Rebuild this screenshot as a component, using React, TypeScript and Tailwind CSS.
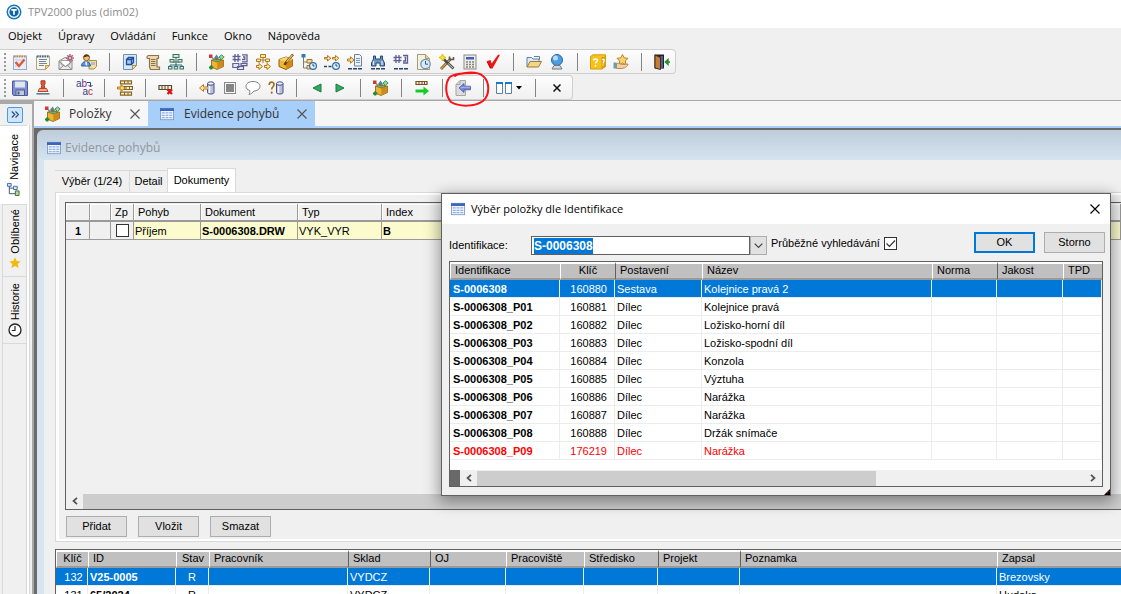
import { useEffect, useRef, type ReactNode } from "react";

const UI = "font-['Liberation_Sans',Arial,sans-serif]";
const HUM = "font-['Open_Sans','Noto_Sans',sans-serif]";

function Ico({ children, size = "size-4" }: { children: ReactNode; size?: string }) {
  return (
    <svg viewBox="0 0 16 16" className={`${size} shrink-0`} fill="none" aria-hidden="true">
      {children}
    </svg>
  );
}

const CLOCK = (
  <>
    <circle cx="12" cy="12" r="3.4" fill="#e4f1fc" stroke="#2f6cab" strokeWidth="1.2" />
    <path d="M12 10v2h1.6" stroke="#1f4f86" />
  </>
);
const DASHES = <path d="M1 14.8h4M6 14.8h4M11 14.8h4" stroke="#23456f" strokeWidth="1.4" />;

const GEAR = (
  <>
    <path d="M3 1v8M6 1v8M.5 3.500h8M.5 6.500h8" stroke="#5f5f96" strokeWidth="1.3" />
    <rect x="3" y="3.500" width="3" height="3" fill="#fff" stroke="#5f5f96" />
  </>
);

const icons: Record<string, ReactNode> = {
  checklist: (
    <>
      <rect x="1.5" y="2" width="13" height="13.5" fill="#e6eefb" stroke="#9aa9cb" />
      <path d="M2 2.5h12" stroke="#c88b3e" strokeWidth="2" strokeDasharray="1.5 1" />
      <path d="M3 6h9M3 9h3M3 12h4" stroke="#b9cbe4" />
      <path d="M3.5 8l3.500 4 5.500-6.500" stroke="#dd5a35" strokeWidth="2.4" />
    </>
  ),
  notepad: (
    <>
      <path d="M1.5 2h13v9.5l-4 4h-9z" fill="#fbf6df" stroke="#a3a79e" />
      <path d="M2 2.5h12" stroke="#4f6283" strokeWidth="2" strokeDasharray="1.5 1" />
      <path d="M4 5.5h8M4 7.5h7M4 9.5h8M4 11.5h5" stroke="#7085ad" />
      <path d="M10.500 15.500v-4h4z" fill="#f4d789" stroke="#b59b58" />
    </>
  ),
  mail: (
    <>
      <path d="M1 7l6-3.500 7 3.500v8.500H1z" fill="#ececec" stroke="#8b8b8b" />
      <path d="M3 6.500h9v4l-4.500 2L3 10.500z" fill="#fff" stroke="#aaa" />
      <path d="M1 15.500l5-4.500M14 15.500L9 11M1 7.500l6.500 5 6.500-5" stroke="#8b8b8b" />
      <path d="M12 0v8M8 4h8M9.200 1.200l5.600 5.600M14.800 1.200L9.200 6.800" stroke="#b0657f" strokeWidth="1.500" />
      <circle cx="12" cy="4" r="1.500" fill="#f6e9ee" stroke="#a55a76" />
    </>
  ),
  person: (
    <>
      <path d="M8 6.500h7.500v6l-2.500 2.500H8z" fill="#f7e096" stroke="#a58f4d" />
      <rect x="10" y="8" width="4" height="3" fill="#a9bfdb" />
      <circle cx="5.500" cy="3.700" r="3" fill="#f1c27d" stroke="#8b5a2b" />
      <path d="M2.500 3.500c0-4 6-4 6 0L7 2.300z" fill="#5a3414" />
      <path d="M.5 12c0-6 8.500-6 9 0z" fill="#5b97d6" stroke="#2e5f99" />
      <path d="M5 7.500l.5 4" stroke="#fff" strokeWidth="1.500" />
    </>
  ),
  docCube: (
    <>
      <path d="M1.500 .5h13v11l-4 4h-9z" fill="#d6e7f8" stroke="#6e90b8" />
      <path d="M4.500 5.500h5v5h-5zM4.500 5.500l2-2h5v5l-2 2M9.500 5.500l2-2" fill="#a9c8ee" stroke="#1f4f9a" strokeWidth="1.300" />
      <path d="M10.500 15.500v-4h4z" fill="#f8dc92" stroke="#a58f4d" />
    </>
  ),
  scroll: (
    <>
      <path d="M3.500 1.500h10v3H12v8.500h2.500v2.500h-9L4.500 13V4.500h-2c-1-1-.5-3 1-3z" fill="#ecd9a8" stroke="#8b7350" strokeWidth="1.200" />
      <path d="M6 5.500h4.500M6 7.500h4.500M6 9.500h4.500M6 11.500h4.500" stroke="#8b7350" />
    </>
  ),
  treeGreen: (
    <>
      <path d="M8 4v8M3.500 8h9M3.500 7v1M12.500 7v1M2 13v-2h12v2M8 10v1" stroke="#31717a" />
      <g fill="#e9ef92" stroke="#31717a">
        <rect x="5" y=".5" width="6" height="3" />
        <rect x="2" y="5.500" width="4" height="2.500" />
        <rect x="10" y="5.500" width="4" height="2.500" />
        <rect x=".5" y="12.500" width="3.500" height="2.500" />
        <rect x="6.200" y="12.500" width="3.500" height="2.500" />
        <rect x="12" y="12.500" width="3.500" height="2.500" />
      </g>
    </>
  ),
  box: (
    <>
      <path d="M2.500 6l5.500 2 6.500-2v6.500L8 15.500l-5.500-2.500z" fill="#f2b32e" stroke="#8a5a12" strokeWidth=".8" />
      <path d="M8.300 8.200l6-2v6.100l-6 2.900z" fill="#cf8a1e" />
      <path d="M2.500 6L7 3.500 14.500 6 8 8z" fill="#8a6a32" />
      <rect x="0" y=".5" width="3.500" height="3.500" fill="#d2392e" />
      <path d="M3 3.500l3 3" stroke="#6e8f9c" strokeWidth="1.200" />
      <path d="M7.500 .5L10 4H5z" fill="#4d87ad" />
      <path d="M12.500 .8l2.700 2.200-2.700 2.500-2.500-2.500z" fill="#8fd9a0" stroke="#3f9a56" />
      <path d="M5 6.500h6" stroke="#57b86a" strokeWidth="1.500" />
      <path d="M2.200 11.500v4M0 13.500h4.400" stroke="#1d8c2c" strokeWidth="2.200" />
    </>
  ),
  gears: (
    <>
      <g transform="translate(0 -1)">{GEAR}</g>
      <path d="M10 .8h5v7h-5M11 3h1.800v2.500H10" stroke="#5f5f96" strokeWidth="1.300" />
      <path d="M.8 9.500h6v4h-6zM9 9.500h6v2.200H9zM5.500 12.500h6v3h-6z" fill="#e3e6f3" stroke="#5f5f96" strokeWidth="1.200" />
    </>
  ),
  treeOrange: (
    <>
      <path d="M8 3v6M3 6h10M4 6v3M12 6v3M1 12h5M9 12h5" stroke="#b5791b" />
      <g fill="#fbe6ae" stroke="#b5791b">
        <path d="M5.500.5h5v3h-5zM1.500 5h4v2.500h-4zM10.500 5h4v2.500h-4z" />
        <path d="M4 9.500l3.500 3L4 15.500v-2H1.500v-2H4zM12 9.500l3.500 3-3.500 3v-2H9.500v-2H12z" />
      </g>
    </>
  ),
  boxPencil: (
    <>
      <path d="M1 5.500l7-2.500 6.500 2.500V12L8 15.500 1 12.500z" fill="#f2b632" stroke="#8a5a12" />
      <path d="M8 8l6.500-2.500V12L8 15.500z" fill="#d08a1c" />
      <path d="M1 5.500l7-2.500 6.500 2.500L8 8z" fill="#f9d575" />
      <path d="M15 .5L8 8.500l-1.500 2.500" stroke="#5c3b10" strokeWidth="2.400" />
      <path d="M14.500 1L8.500 8" stroke="#f2c14e" strokeWidth="1.200" />
    </>
  ),
  treeClock: (
    <>
      <path d="M2.500 3v11h4M2.500 8h4" stroke="#7a7a7a" />
      <rect x=".5" y="0" width="4" height="3.500" fill="#2f7fae" />
      <path d="M6 5.500h5v3.500H6zM6 11.500h3.500V15H6z" fill="#f5d98d" stroke="#a87720" />
      {CLOCK}
    </>
  ),
  arrowsClock: (
    <>
      <path d="M.5 3.500h3V1.500L6.800 4.200 3.500 7V5h-3zM8.500 3.500h3V1.500l3.300 2.700L11.500 7V5h-3z" fill="#fbe6ae" stroke="#b5791b" />
      <path d="M0 12.500h3M4.500 12.500h3" stroke="#23456f" strokeWidth="1.500" />
      {CLOCK}
    </>
  ),
  arrowDoc: (
    <>
      <path d="M7.500 .5h5l2 2v9.500h-7z" fill="#eef4fb" stroke="#6d7f99" />
      <path d="M9 4.500h4M9 6.500h4M9 8.500h4" stroke="#7f95b5" />
      <path d="M.5 5h3V2.800l3.500 3.200-3.500 3.200V7h-3z" fill="#fbe6ae" stroke="#b5791b" />
      {DASHES}
    </>
  ),
  binoculars: (
    <>
      <path d="M3.500 2h2v3h5V2h2v3l2 4v3h-4.500V9H6v3H1.500V9l2-4z" fill="#6e94bd" stroke="#244a7a" />
      <path d="M3.500 7v4M12 7v4" stroke="#d5e6f5" strokeWidth="1.300" />
      {DASHES}
    </>
  ),
  gearDash: (
    <>
      <g>{GEAR}</g>
      <path d="M10 1.500h4.500v7.500H10M11.500 3.500h1v3.500H10" stroke="#5f5f96" strokeWidth="1.300" />
      {DASHES}
    </>
  ),
  docClock: (
    <>
      <path d="M1.500 .5h8l4 4v11h-12z" fill="#f6f1de" stroke="#a39a7c" />
      <path d="M9.500.5v4h4" fill="#f2cf7c" stroke="#a39a7c" />
      <circle cx="9.500" cy="10" r="4.700" fill="#dcebf8" stroke="#6f94b8" strokeWidth="1.300" />
      <path d="M9.500 7v3.200h2.500" stroke="#33597f" />
    </>
  ),
  tools: (
    <>
      <path d="M2 15L12 4.500" stroke="#5a4a2d" strokeWidth="2.600" />
      <path d="M2 15L12 4.500" stroke="#dfa435" strokeWidth="1.300" />
      <path d="M5 5.500L14.500 14.500" stroke="#4b4b4b" strokeWidth="2.600" />
      <path d="M9 9.500l5 4.500" stroke="#c9c9c9" />
      <path d="M10.500 2.500v3h4V3" stroke="#5a5a5a" strokeWidth="1.600" />
      <path d="M3.500 0l1 2.500L7 3.500 4.500 4.500l-1 2.500-1-2.500L0 3.500l2.500-1z" fill="#ffe81a" stroke="#d9bd00" strokeWidth="1" />
    </>
  ),
  calculator: (
    <>
      <rect x="2" y="1" width="12" height="14" fill="#efece8" stroke="#8d8987" />
      <rect x="4" y="3" width="8" height="2.500" fill="#3b62b3" />
      <path d="M4 8h8M4 10.500h8M4 13h8" stroke="#85817e" strokeWidth="1.300" strokeDasharray="2 1" />
    </>
  ),
  check: (
    <>
      <path d="M2 7l3.500-1 1.200 3.500L13 .8h2L7.500 14.500H5z" fill="#f01414" />
      <path d="M2 7.500l3.500 6.500" stroke="#a80d0d" />
    </>
  ),
  folder: (
    <>
      <path d="M1 13V3.500h4.500L7 5h6v3" fill="#dfeaf7" stroke="#5b7fb0" />
      <path d="M1 13L4 7.500h11.500L12.500 13z" fill="#f4d68a" stroke="#a47a32" />
      <path d="M8 2.500h5.500v3" stroke="#5b7fb0" />
    </>
  ),
  globe: (
    <>
      <circle cx="8" cy="6" r="5.500" fill="#4a9de0" stroke="#2767a5" />
      <circle cx="6.500" cy="4" r="2.500" fill="#b8dcf8" />
      <path d="M5 11.500h6l2 3.500H3z" fill="#d5d7da" stroke="#75797f" />
    </>
  ),
  questionBox: (
    <>
      <path d="M.5 2.500L3 .8h12.500v11.700L12 15H.5z" fill="#f7c21c" stroke="#d69e0c" />
      <path d="M11.500 3h4v9.500l-4 2.500z" fill="#d89c0e" />
      <path d="M3.500 6.500c0-2 4-2 4 0 0 1.500-2 1.200-2 3M5.500 11v1.500M12.500 6c1-1.500 2-.5 1.500 1l-1 2.500M13 10.500v1" stroke="#fff" strokeWidth="1.400" />
    </>
  ),
  handStar: (
    <>
      <path d="M9.500 .5l1.700 3.300 3.800.5-2.700 2.700.6 3.800-3.400-1.700-3.400 1.700.6-3.800L4 4.300l3.800-.5z" fill="#f7d36b" stroke="#b8862a" />
      <path d="M.5 8.500h3v6h-3z" fill="#5aa2c4" />
      <path d="M3.500 9.500c3-1 4 1.500 7 1l4.500-.5c0 2.500-4 4.500-7 4.500H3.500z" fill="#f3cfa4" stroke="#b98752" />
    </>
  ),
  door: (
    <>
      <path d="M.5 .5H10v14H.5z" fill="#2b1f1a" />
      <path d="M6.500 2h2.500v12.500H6.500z" fill="#3b63a8" />
      <path d="M1 1l5.500 2.500v12L1 14z" fill="#c47c3c" stroke="#4b2c12" />
      <path d="M16 8h-3M14 5.500L11.300 8l2.700 2.500z" fill="#3fae3a" stroke="#2a8b2a" strokeWidth="1.400" />
    </>
  ),
  save: (
    <>
      <path d="M.5 1h14l1 1v13.500H1.500L.5 14z" fill="#7f8fce" stroke="#4a5a99" />
      <rect x="3" y="1.500" width="10" height="6" fill="#dfe6f3" />
      <path d="M4 10h8.500v5.500H4z" fill="#c4cad6" stroke="#4a5a99" />
      <rect x="5.500" y="11.500" width="2" height="3" fill="#4a5a99" />
    </>
  ),
  stamp: (
    <>
      <path d="M6 .8h4v3l-.8 1.500.6 3H6.200l.6-3-.8-1.500z" fill="#e4553a" stroke="#a83a26" />
      <path d="M4.500 8.500h7l1.500 3H3z" fill="#f5a48e" stroke="#b8452f" />
      <path d="M1.500 13.800h13" stroke="#5a7d8d" strokeWidth="1.600" />
    </>
  ),
  rowsArrow: (
    <>
      <path d="M3.500 .8h11v3h-11zM6 6.500h9.500v3H6zM3.500 12.200h11v3h-11z" fill="#f9edc6" stroke="#8a6425" strokeWidth="1.200" />
      <path d="M7.500 1v3M11 1v3M9 6.500v3M12.500 6.500v3M7.500 12.200v3M11 12.200v3" stroke="#8a6425" />
      <path d="M.5 7h3.500V4.500L8 8l-4 3.500V9H.5z" fill="#ffd96b" stroke="#b5791b" />
    </>
  ),
  rowDelete: (
    <>
      <path d="M1 5.500h12.500v4H1z" fill="#f4edc8" stroke="#5b4a3b" strokeWidth="1.200" />
      <path d="M4 5.500v4M7 5.500v4M10 5.500v4" stroke="#5b4a3b" />
      <path d="M9.500 9.500l4.500 4.500M14 9.500L9.500 14" stroke="#e00f0f" strokeWidth="2.200" />
    </>
  ),
  arrowCylinder: (
    <>
      <path d="M8.500 3.500v9c0 2 6.500 2 6.500 0v-9z" fill="#b9bfdf" stroke="#474d86" />
      <ellipse cx="11.800" cy="3.500" rx="3.200" ry="1.700" fill="#eef0fa" stroke="#474d86" />
      <path d="M10.500 6v7" stroke="#f5f6fc" strokeWidth="1.500" />
      <path d="M9 7H4.500V4.500L.5 8l4 3.500V9H9" fill="#fbe6ae" stroke="#b5791b" />
    </>
  ),
  stop: (
    <>
      <rect x="2.500" y="2.500" width="11" height="11" fill="#f7f7f7" stroke="#8a8a8a" />
      <rect x="4" y="4" width="8" height="8" fill="#858585" />
    </>
  ),
  speech: <path d="M8 1.500c4 0 7 2 7 4.800s-3 4.700-6 4.700c-1.500 1.500-2.500 3-5 3.500.7-1 1-2.500.7-4C2.500 9.700 1 8.500 1 6.300 1 3.500 4 1.500 8 1.500z" fill="#fff" stroke="#7d7d7d" />,
  questionCylinder: (
    <>
      <path d="M8.500 3.500v9c0 2 6.500 2 6.500 0v-9z" fill="#b9bfdf" stroke="#474d86" />
      <ellipse cx="11.800" cy="3.500" rx="3.200" ry="1.700" fill="#eef0fa" stroke="#474d86" />
      <path d="M10.500 6v7" stroke="#f5f6fc" strokeWidth="1.500" />
      <path d="M1.200 5c0-3.800 4.800-3.800 4.800-.5 0 2.300-2.300 2.200-2.300 5M3.700 11.500v2.300" stroke="#a6701c" strokeWidth="1.700" />
    </>
  ),
  prev: <path d="M12 4v8L4 8z" fill="#35a862" stroke="#1c7a3e" />,
  next: <path d="M4 4v8l8-4z" fill="#35a862" stroke="#1c7a3e" />,
  rowGreen: (
    <>
      <path d="M2 1.500h11v3H2z" fill="#f4edc8" stroke="#7a4c2a" strokeWidth="1.200" />
      <path d="M5 1.500v3M8 1.500v3M10.500 1.500v3" stroke="#7a4c2a" />
      <path d="M1.500 9.500h8V6.500L15 11l-5.500 4.500v-3h-8z" fill="#12cf22" />
    </>
  ),
  pageBlue: (
    <>
      <path d="M1 4.500L5 .5h5.500v15H1z" fill="#dcdcdc" stroke="#a5a5a5" />
      <path d="M5 .5v4H1" stroke="#a5a5a5" />
      <path d="M4 8l5-4.500v2.700h6.500v3.600H9v2.700z" fill="#7686d4" stroke="#4656a8" strokeWidth=".8" />
      <path d="M5.500 8L9 7.200h6" stroke="#b3bdec" />
    </>
  ),
  windows: (
    <>
      <path d="M.5 2.500h6v11h-6zM9.500 2.500h6v11h-6z" fill="#fff" stroke="#5b7fa8" />
      <path d="M0 3h7M9 3h7" stroke="#1878d0" strokeWidth="2.200" />
    </>
  ),
  table: (
    <>
      <rect x=".5" y="1.500" width="15" height="13" fill="#f2f6fc" stroke="#8199c6" />
      <path d="M0 3h16" stroke="#3a65c0" strokeWidth="3.200" />
      <path d="M2 6.800h12M2 9.500h12M2 12.200h12" stroke="#8fb0e2" strokeWidth="1.400" strokeDasharray="3.400 .9" />
    </>
  ),
};

function ToolButton({ name, wide }: { name: string; wide?: boolean }) {
  return (
    <button type="button" aria-label={name} className={`flex h-5 shrink-0 items-center justify-center ${wide ? "w-[34px] gap-1" : "w-[23px]"}`}>
      <Ico>{icons[name]}</Ico>
      {wide && (
        <svg viewBox="0 0 6 4" className="h-1 w-1.5" aria-hidden="true">
          <path d="M0 0h6L3 3.500z" fill="#000" />
        </svg>
      )}
    </button>
  );
}

function Sep() {
  return (
    <span className="flex w-[18px] shrink-0 justify-center">
      <span className="h-[18px] w-px bg-[#838383]" />
    </span>
  );
}

function Grip() {
  return (
    <span className="flex w-1 flex-col gap-0.5">
      {[0, 1, 2, 3, 4].map((i) => (
        <span key={i} className="size-0.5 bg-[#9a9a9a]" />
      ))}
    </span>
  );
}

function ToolGroup({ groups }: { groups: string[][] }) {
  return (
    <>
      {groups.map((g, i) => (
        <div key={i} className="flex items-center">
          {i > 0 && <Sep />}
          {g.map((n, j) => (
            <ToolButton key={j} name={n} wide={n === "windows"} />
          ))}
        </div>
      ))}
    </>
  );
}

const BAR = "flex h-[25px] w-fit items-center rounded-r border border-l-0 border-[#cfcfcf] bg-linear-to-b from-[#fdfdfd] to-[#f0f0f0] pl-1 pr-0.5";

function Toolbars() {
  return (
    <div className="flex flex-col gap-px border-b border-[#a8a8a8] bg-[#f0f0f0]">
      <div role="toolbar" aria-label="Hlavní" className={BAR}>
        <Grip />
        <ToolGroup
          groups={[
            ["checklist", "notepad", "mail", "person"],
            ["docCube", "scroll", "treeGreen"],
            ["box", "gears", "treeOrange", "boxPencil", "treeClock", "arrowsClock", "arrowDoc", "binoculars", "gearDash", "docClock", "tools", "calculator", "check"],
            ["folder", "globe"],
            ["questionBox", "handStar"],
            ["door"],
          ]}
        />
      </div>
      <div role="toolbar" aria-label="Okno" className={BAR}>
        <Grip />
        <ToolGroup groups={[["save", "stamp"]]} />
        <Sep />
        <button type="button" aria-label="Nahradit" className={`flex h-5 w-[23px] flex-col items-center justify-center pr-0.5 pl-1 ${UI} text-[10px] leading-[8px]`}>
          <span className="flex self-start text-[#2c3f88]">
            a<span className="text-[#7c2f7c]">b</span>
            <svg viewBox="0 0 6 8" className="h-2 w-1.5" fill="none" aria-hidden="true">
              <path d="M0 2.500h3.500v4M1.500 5l2 2 2-2" stroke="#2c3f88" />
            </svg>
          </span>
          <span className="self-end text-[#2c3f88]">
            a<span className="text-[#c2304a]">c</span>
          </span>
        </button>
        <Sep />
        <ToolGroup
          groups={[["rowsArrow"], ["rowDelete"], ["arrowCylinder", "stop", "speech", "questionCylinder"], ["prev", "next"], ["box"], ["rowGreen"]]}
        />
        <Sep />
        <div className="relative">
          <ToolButton name="pageBlue" />
          <svg viewBox="0 0 46 38" className="pointer-events-none absolute -top-2 -left-1.5 z-10 h-[38px] w-[46px] max-w-none" fill="none" aria-hidden="true">
            <path
              d="M10 6C14 3 31 0 38 6C45 12 45 25 38 31C30 37 14 37 6 32C0 25 0 14 4 8C8 3 20 3 29 3"
              stroke="#fb1118"
              strokeWidth="2"
              strokeLinecap="round"
            />
          </svg>
        </div>
        <Sep />
        <ToolButton name="windows" wide />
        <Sep />
        <button type="button" aria-label="Zavřít" className="flex h-5 w-[26px] items-center justify-center">
          <svg viewBox="0 0 8 8" className="size-2" aria-hidden="true">
            <path d="M.5.5l7 7M7.500.5l-7 7" stroke="#111" strokeWidth="1.500" />
          </svg>
        </button>
      </div>
    </div>
  );
}

const VERT = `rotate-180 [writing-mode:vertical-rl] ${UI} text-[11px] leading-[14px]`;

function Sidebar() {
  return (
    <aside className="flex w-[34px] shrink-0 flex-col border-t-[3px] border-r-2 border-[#a8a8a8] bg-[#f0f0f0]">
      <div className="flex h-[21px] items-center pl-[7px]">
        <button type="button" aria-label="Rozbalit" className="flex size-4 items-center justify-center rounded-xs border border-[#4a9be8] bg-[#cfe5fa]">
          <svg viewBox="0 0 8 7" className="h-[7px] w-2" fill="none" aria-hidden="true">
            <path d="M.8.5l3 3-3 3M4.500.5l3 3-3 3" stroke="#274f86" strokeWidth="1.200" />
          </svg>
        </button>
      </div>
      <div className="mr-0.5 flex flex-1 flex-col border-r border-[#d9d9d9] bg-white">
        <div className="mr-0.5 flex flex-1 flex-col border-t border-[#d9d9d9] bg-[#f0f0f0]">
          <button type="button" className="flex h-[78px] flex-col items-center gap-[3px] bg-white pt-2">
            <span className={VERT}>Navigace</span>
            <svg viewBox="0 0 14 14" className="size-[13px]" fill="none" aria-hidden="true">
              <path d="M2.500 3v8.500H9M2.500 5.500H8" stroke="#2f4f7f" />
              <path d="M.5.5h4v3h-4zM7 3.500h4v3.500H7z" fill="#dbe7f5" stroke="#3a66a8" />
              <path d="M9 8.500h4v5H9z" fill="#b7d6a5" stroke="#3d6b2c" />
            </svg>
          </button>
          <div className="ml-0.5 flex flex-1 flex-col border-r border-l border-[#d9d9d9]">
            <button type="button" className="flex h-[73px] flex-col items-center gap-[3px] border-y border-[#d9d9d9] pt-1">
              <span className={VERT}>Oblíbené</span>
              <svg viewBox="0 0 12 12" className="size-3" aria-hidden="true">
                <path d="M6 .3l1.700 3.700 4 .4-3 2.700.9 4L6 9l-3.600 2.100.9-4-3-2.700 4-.4z" fill="#f2b90f" />
              </svg>
            </button>
            <button type="button" className="flex h-[67px] flex-col items-center gap-[3px] border-b border-[#d9d9d9] pt-1.5">
              <span className={VERT}>Historie</span>
              <svg viewBox="0 0 14 14" className="size-3.5" fill="none" aria-hidden="true">
                <circle cx="7" cy="7" r="6" fill="#fff" stroke="#222" strokeWidth="1.300" />
                <path d="M7 3v4.500H3.800" stroke="#222" strokeWidth="1.200" />
              </svg>
            </button>
          </div>
        </div>
      </div>
    </aside>
  );
}

function CloseX({ color = "#555", size = "size-2.5" }: { color?: string; size?: string }) {
  return (
    <svg viewBox="0 0 10 10" className={size} aria-hidden="true">
      <path d="M.5.5l9 9M9.500.5l-9 9" stroke={color} strokeWidth="1.200" />
    </svg>
  );
}

function DocTab({ icon, label, active }: { icon: string; label: string; active?: boolean }) {
  return (
    <div className={`flex h-full items-center ${active ? "w-[167px] bg-[#a8cffa]" : "w-[114px]"}`}>
      <button type="button" className={`flex flex-1 items-center ${active ? "gap-2.5 pl-3" : "gap-2 pl-[11px]"}`}>
        <Ico size={active ? "size-3.5" : "size-4"}>{icons[icon]}</Ico>
        <span className={`${HUM} text-[12px] leading-5 text-[#333]`}>{label}</span>
      </button>
      <button type="button" aria-label={`Zavřít ${label}`} className="pr-2">
        <CloseX />
      </button>
    </div>
  );
}

const WBTN = "h-[21px] w-[61px] border border-[#adadad] bg-[#e1e1e1] text-center text-[11px]";

type Col = { w: string; t: string; a?: string; dark?: boolean };

const mainCols: Col[] = [
  { w: "w-[32px]", t: "Klíč", a: "text-center" },
  { w: "w-[88px]", t: "ID" },
  { w: "w-[33px]", t: "Stav", a: "text-center" },
  { w: "w-[139px]", t: "Pracovník" },
  { w: "w-[82px]", t: "Sklad", dark: true },
  { w: "w-[76px]", t: "OJ", dark: true },
  { w: "w-[78px]", t: "Pracoviště" },
  { w: "w-[74px]", t: "Středisko" },
  { w: "w-[82px]", t: "Projekt", dark: true },
  { w: "w-[257px]", t: "Poznamka", dark: true },
  { w: "w-[125px]", t: "Zapsal" },
];

const mainRows = [
  ["132", "V25-0005", "R", "", "VYDCZ", "", "", "", "", "", "Brezovsky"],
  ["131", "65/2024", "R", "", "VYDCZ", "", "", "", "", "", "Hudaka"],
];

const pickCols: Col[] = [
  { w: "w-[110px]", t: "Identifikace" },
  { w: "w-[55px]", t: "Klíč", a: "text-center" },
  { w: "w-[87px]", t: "Postavení", dark: true },
  { w: "w-[230px]", t: "Název" },
  { w: "w-[65px]", t: "Norma" },
  { w: "w-[66px]", t: "Jakost", dark: true },
  { w: "w-[39px]", t: "TPD" },
];

const pickRows = [
  ["S-0006308", "160880", "Sestava", "Kolejnice pravá 2"],
  ["S-0006308_P01", "160881", "Dílec", "Kolejnice pravá"],
  ["S-0006308_P02", "160882", "Dílec", "Ložisko-horní díl"],
  ["S-0006308_P03", "160883", "Dílec", "Ložisko-spodní díl"],
  ["S-0006308_P04", "160884", "Dílec", "Konzola"],
  ["S-0006308_P05", "160885", "Dílec", "Výztuha"],
  ["S-0006308_P06", "160886", "Dílec", "Narážka"],
  ["S-0006308_P07", "160887", "Dílec", "Narážka"],
  ["S-0006308_P08", "160888", "Dílec", "Držák snímače"],
  ["S-0006308_P09", "176219", "Dílec", "Narážka"],
];

function HeadRow({ cols }: { cols: Col[] }) {
  return (
    <thead>
      <tr>
        {cols.map((c) => (
          <th
            key={c.t}
            className={`h-[18px] border-t-2 border-b-2 border-l border-t-white border-b-[#9a9a9a] bg-[#c0c0c0] px-1 pt-0 pb-px text-[11px] leading-[13px] font-normal ${c.w} ${
              c.dark ? "border-l-[#606060]" : "border-l-white"
            } ${c.a ?? "text-left"}`}
          >
            {c.t}
          </th>
        ))}
      </tr>
    </thead>
  );
}

const BODY_CELL = "h-[18px] border-r border-b border-[#ececec] pt-0.5 pb-0 text-[11px] leading-[15px]";

function MainTable() {
  return (
    <table className="w-[1066px] table-fixed border-separate border-spacing-0 bg-white">
      <HeadRow cols={mainCols} />
      <tbody>
        {mainRows.map((r, i) => (
          <tr key={r[0]} className={i === 0 ? "bg-[#0078d7] text-white" : "text-black"}>
            {r.map((v, j) => (
              <td
                key={j}
                className={`${BODY_CELL} ${j === 0 ? "pr-0 pl-1 text-center" : j === 2 ? "px-0 text-center" : "pr-0 pl-0.5"} ${
                  j === 1 ? "font-bold" : ""
                }`}
              >
                {v}
              </td>
            ))}
          </tr>
        ))}
      </tbody>
    </table>
  );
}

function ArrowLeft() {
  return (
    <svg viewBox="0 0 6 8" className="h-2 w-1.5" fill="none" aria-hidden="true">
      <path d="M5 .8L1.500 4 5 7.200" stroke="#505050" strokeWidth="1.700" />
    </svg>
  );
}

function DocTable() {
  const head = "h-[18px] border-r border-b-2 border-[#9a9a9a] bg-[#f0f0f0] p-0 px-1 text-left text-[11px] leading-4 font-normal shadow-[inset_1px_1px_0_#fff]";
  const cell = "h-[18px] border-r border-b border-[#9a9a9a] p-0 pl-px text-[11px] leading-4";
  return (
    <table className="mt-px w-full table-fixed border-separate border-spacing-0">
      <thead>
        <tr>
          <th className={`w-6 ${head}`} />
          <th className={`w-[21px] ${head}`} />
          <th className={`w-[23px] ${head}`}>Zp</th>
          <th className={`w-[67px] ${head}`}>Pohyb</th>
          <th className={`w-[97px] ${head}`}>Dokument</th>
          <th className={`w-[84px] ${head}`}>Typ</th>
          <th className={head}>Index</th>
        </tr>
      </thead>
      <tbody>
        <tr>
          <td className={`text-center font-bold ${cell}`}>1</td>
          <td className={cell} />
          <td className={cell}>
            <input type="checkbox" aria-label="Zp" className="mx-auto block size-[13px] appearance-none border border-[#333] bg-white" />
          </td>
          <td className={`bg-[#fbfbcd] ${cell}`}>Příjem</td>
          <td className={`bg-[#fbfbcd] font-bold ${cell}`}>S-0006308.DRW</td>
          <td className={`bg-[#fbfbcd] ${cell}`}>VYK_VYR</td>
          <td className={`bg-[#fbfbcd] font-bold ${cell}`}>B</td>
        </tr>
      </tbody>
    </table>
  );
}

function Dialog() {
  const input = useRef<HTMLInputElement>(null);
  useEffect(() => {
    input.current?.focus();
    input.current?.select();
  }, []);
  return (
    <section
      role="dialog"
      aria-labelledby="dlg-title"
      className="absolute top-[193px] left-[441px] z-20 flex h-[303px] w-[670px] flex-col border border-[#606060] bg-[#f0f0f0] shadow-[0_4px_14px_2px_rgba(0,0,0,0.38)]"
    >
      <header className="flex h-[30px] items-center gap-1.5 bg-white pr-2.5 pl-[9px]">
        <Ico size="size-3.5">{icons.table}</Ico>
        <h2 id="dlg-title" className={`flex-1 ${HUM} text-[11px] leading-4`}>
          Výběr položky dle Identifikace
        </h2>
        <button type="button" aria-label="Zavřít">
          <CloseX color="#000" />
        </button>
      </header>
      <div className="flex h-[33px] items-center pt-2 pr-[5px] pb-0.5 pl-[7px] text-[11px]">
        <label htmlFor="ident" className="w-[82px] pt-1">
          Identifikace:
        </label>
        <div className="flex h-[19px] w-[236px] self-end">
          <input
            ref={input}
            id="ident"
            defaultValue="S-0006308"
            className="min-w-0 flex-1 border border-[#606060] bg-white px-0.5 text-[12px] leading-4 font-bold caret-[#ff8728] outline-none selection:bg-[#0078d7] selection:text-white"
          />
          <button type="button" aria-label="Nabídka" className="flex w-[17px] items-center justify-center border border-[#adadad] bg-[#e1e1e1]">
            <svg viewBox="0 0 9 6" className="h-1.5 w-[9px]" fill="none" aria-hidden="true">
              <path d="M.7.7l3.800 3.800L8.300.7" stroke="#444" strokeWidth="1.200" />
            </svg>
          </button>
        </div>
        <label htmlFor="live" className="pl-1">
          Průběžné vyhledávání
        </label>
        <span className="relative ml-1 size-[13px]">
          <input id="live" type="checkbox" defaultChecked className="block size-full appearance-none border border-[#333] bg-white" />
          <svg viewBox="0 0 13 13" className="pointer-events-none absolute inset-0" fill="none" aria-hidden="true">
            <path d="M2.500 6.500l3 3L11 3.500" stroke="#333" strokeWidth="1.200" />
          </svg>
        </span>
        <div className="ml-auto flex gap-[9px] self-start">
          <button type="button" className="h-[21px] w-[61px] border-2 border-[#0078d7] bg-[#e1e1e1]">
            OK
          </button>
          <button type="button" className={WBTN}>
            Storno
          </button>
        </div>
      </div>
      <div className="mx-[7px] mt-1 mb-2 flex flex-1 flex-col justify-between border border-[#606060] bg-white">
        <table className="w-full table-fixed border-separate border-spacing-0">
          <HeadRow cols={pickCols} />
          <tbody>
            {pickRows.map((r, i) => (
              <tr key={r[0]} className={i === 0 ? "bg-[#0078d7] text-white" : i === 9 ? "text-[#ff0000]" : "text-black"}>
                {[...r, "", "", ""].map((v, j) => (
                  <td
                    key={j}
                    className={`${BODY_CELL} ${j === 0 ? "pr-0 pl-[3px] font-bold" : j === 1 ? "pr-[7px] pl-0 text-right" : "pr-0 pl-0.5"}`}
                  >
                    {v}
                  </td>
                ))}
              </tr>
            ))}
          </tbody>
        </table>
        <div className="flex h-4 items-center bg-[#f0f0f0]">
          <span className="h-full w-2.5 bg-[#696969]" />
          <button type="button" aria-label="Vlevo" className="flex w-[17px] justify-center">
            <ArrowLeft />
          </button>
          <span className="h-[15px] w-[399px] bg-[#cdcdcd]" />
          <button type="button" aria-label="Vpravo" className="ml-auto rotate-180 px-1.5">
            <ArrowLeft />
          </button>
        </div>
      </div>
      <svg viewBox="0 0 6 6" className="absolute right-0 bottom-0 size-1.5" aria-hidden="true">
        <path d="M6 0v6H0z" fill="#000" />
        <path d="M3 3.500h1v1H3zM4.500 2h1v1h-1z" fill="#f00" />
      </svg>
    </section>
  );
}

export default function App() {
  return (
    <div className={`relative flex h-screen flex-col overflow-hidden bg-[#f0f0f0] text-black ${UI}`}>
      <header className="flex h-7 shrink-0 items-center gap-1.5 bg-white pb-1 pl-1.5">
        <svg viewBox="0 0 16 16" className="size-4" fill="none" aria-hidden="true">
          <circle cx="8" cy="8" r="7.500" fill="#1779bd" />
          <circle cx="8" cy="8" r="5.300" fill="#0f62a5" stroke="#fff" strokeWidth="1.300" />
          <path d="M5.300 5.800h5.400M8 5.800v5" stroke="#fff" strokeWidth="1.700" />
        </svg>
        <span className={`${HUM} text-[11px] text-[#8c8c8c]`}>TPV2000 plus (dim02)</span>
      </header>
      <nav className={`flex h-[21px] shrink-0 items-center gap-4 px-2 pb-1 ${HUM} text-[11px]`}>
        {["Objekt", "Úpravy", "Ovládání", "Funkce", "Okno", "Nápověda"].map((m) => (
          <button key={m} type="button">
            {m}
          </button>
        ))}
      </nav>
      <Toolbars />
      <div className="flex min-h-0 flex-1">
        <Sidebar />
        <main className="flex min-w-0 flex-1 flex-col">
          <div className="flex h-[27px] shrink-0 border-b-2 border-[#a8cffa] bg-[#f6f6f6]">
            <DocTab icon="box" label="Položky" />
            <DocTab icon="table" label="Evidence pohybů" active />
          </div>
          <div className="flex min-h-0 flex-1 flex-col bg-[#6a6a6a]">
            <div className="mt-0.5 ml-[3px] flex min-h-0 flex-1 flex-col rounded-tl-md bg-[#d7e4f2] bg-linear-to-b from-[#bfcddb] to-[#d7e4f2] to-[32px] pl-[7px]">
              <div className="flex h-[30px] shrink-0 items-center gap-1 pt-1.5 pl-[3px]">
                <Ico size="size-3.5">{icons.table}</Ico>
                <h1 className={`${HUM} text-[12px] text-[#8f979f]`}>Evidence pohybů</h1>
              </div>
              <div className="flex min-h-0 flex-1 flex-col bg-[#f0f0f0] pt-[7px] pl-[11px]">
                <div role="tablist" className="flex h-[25px] shrink-0 items-end text-[11px]">
                  <button type="button" role="tab" className="h-[22px] w-[75px] border-t border-r border-[#d9d9d9]">
                    Výběr (1/24)
                  </button>
                  <button type="button" role="tab" className="h-[22px] w-[37px] border-t border-[#d9d9d9]">
                    Detail
                  </button>
                  <button type="button" role="tab" aria-selected="true" className="-mb-px h-[25px] w-[69px] border border-b-0 border-[#d9d9d9] bg-white pb-0.5">
                    Dokumenty
                  </button>
                </div>
                <div className="flex h-[350px] shrink-0 flex-col border-y border-l border-[#d9d9d9]">
                  <div className="flex flex-1 flex-col border-y-2 border-l-[3px] border-white pt-[7px] pl-1.5">
                    <div className="flex h-[308px] flex-col justify-between border border-r-0 border-[#606060]">
                      <DocTable />
                      <div className="flex h-4 items-center">
                        <button type="button" aria-label="Vlevo" className="flex w-[17px] justify-center">
                          <ArrowLeft />
                        </button>
                        <span className="h-[15px] flex-1 bg-[#cdcdcd]" />
                      </div>
                    </div>
                    <div className="mt-1.5 flex gap-[11px] pl-px">
                      {["Přidat", "Vložit", "Smazat"].map((b) => (
                        <button key={b} type="button" className={WBTN}>
                          {b}
                        </button>
                      ))}
                    </div>
                  </div>
                </div>
                <div className="mt-[7px] flex min-h-0 flex-1 flex-col overflow-hidden border-t border-l border-[#606060] bg-white">
                  <MainTable />
                </div>
              </div>
            </div>
          </div>
        </main>
      </div>
      <Dialog />
    </div>
  );
}
